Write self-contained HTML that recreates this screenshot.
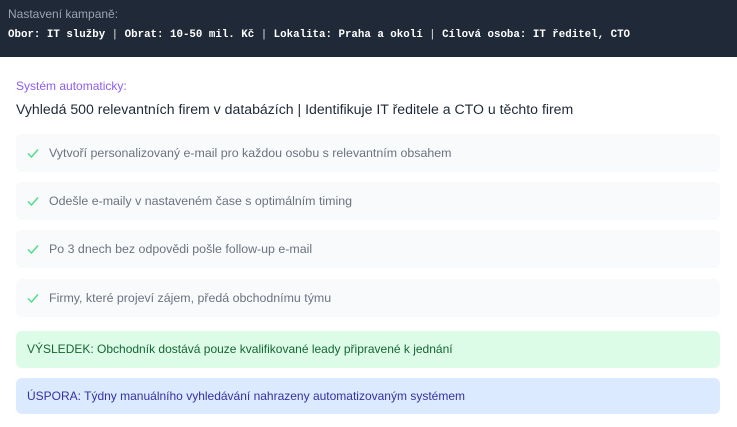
<!DOCTYPE html>
<html><head><meta charset="utf-8"><style>
*{margin:0;padding:0;box-sizing:border-box}
body{width:737px;height:427px;background:#fff;font-family:"Liberation Sans",sans-serif;position:relative;overflow:hidden}
.hdr{position:absolute;left:0;top:0;width:737px;height:57px;background:#1f2937}
.hl{position:absolute;left:8px;top:7px;font-size:12px;color:#9ca3af}
.hm{position:absolute;left:8px;top:29px;font-family:"Liberation Mono",monospace;font-size:10.8px;color:#fff;font-weight:bold;white-space:nowrap}
.hm span{color:#e5e7eb;font-weight:normal}
.t1{position:absolute;left:16px;top:79px;font-size:12px;color:#8b5cf6}
.t2{position:absolute;left:16px;top:101px;font-size:14.1px;color:#1f2937;white-space:nowrap}
.card{position:absolute;left:16px;width:704px;height:38px;border-radius:6px;background:#f9fafb;font-size:12.4px;color:#6b7280;padding-left:33px;line-height:38px;white-space:nowrap}
.card svg{position:absolute;left:11px;top:14px}
.res{position:absolute;left:16px;width:704px;border-radius:6px;font-size:12px;padding-left:11px;white-space:nowrap}
</style></head><body>
<div class="hdr"><div class="hl">Nastavení kampaně:</div>
<div class="hm">Obor: IT služby <span>|</span> Obrat: 10-50 mil. Kč <span>|</span> Lokalita: Praha a okolí <span>|</span> Cílová osoba: IT ředitel, CTO</div></div>
<div class="t1">Systém automaticky:</div>
<div class="t2">Vyhledá 500 relevantních firem v databázích | Identifikuje IT ředitele a CTO u těchto firem</div>
<div class="card" style="top:134px"><svg width="12" height="10" viewBox="0 0 12 10"><path d="M1 5.5L4.5 9L11 1.5" fill="none" stroke="#4ade80" stroke-width="1.4"/></svg>Vytvoří personalizovaný e-mail pro každou osobu s relevantním obsahem</div>
<div class="card" style="top:182px"><svg width="12" height="10" viewBox="0 0 12 10"><path d="M1 5.5L4.5 9L11 1.5" fill="none" stroke="#4ade80" stroke-width="1.4"/></svg>Odešle e-maily v nastaveném čase s optimálním timing</div>
<div class="card" style="top:230px"><svg width="12" height="10" viewBox="0 0 12 10"><path d="M1 5.5L4.5 9L11 1.5" fill="none" stroke="#4ade80" stroke-width="1.4"/></svg>Po 3 dnech bez odpovědi pošle follow-up e-mail</div>
<div class="card" style="top:279px"><svg width="12" height="10" viewBox="0 0 12 10"><path d="M1 5.5L4.5 9L11 1.5" fill="none" stroke="#4ade80" stroke-width="1.4"/></svg>Firmy, které projeví zájem, předá obchodnímu týmu</div>
<div class="res" style="top:331px;height:37px;line-height:37px;background:#dcfce7;color:#166534">VÝSLEDEK: Obchodník dostává pouze kvalifikované leady připravené k jednání</div>
<div class="res" style="top:378px;height:36px;line-height:36px;background:#dbeafe;color:#3730a3">ÚSPORA: Týdny manuálního vyhledávání nahrazeny automatizovaným systémem</div>
</body></html>
